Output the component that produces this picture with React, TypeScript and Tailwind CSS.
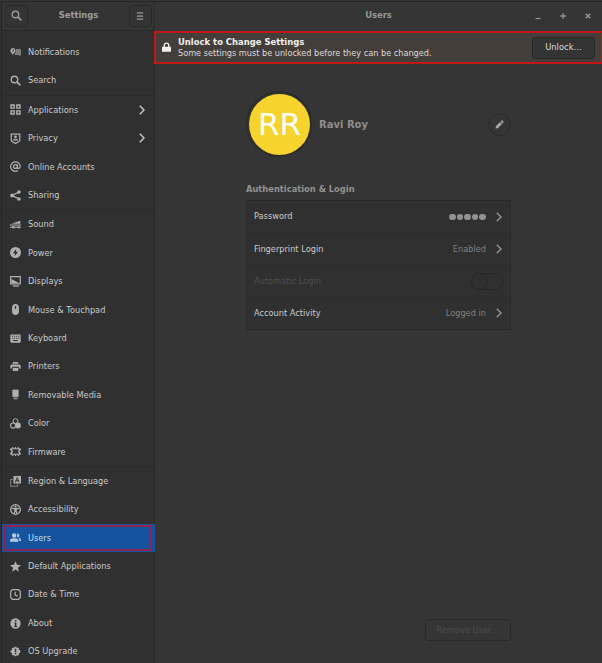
import type { ReactNode } from "react";

function Icon({ children, size = 11 }: { children: ReactNode; size?: number }) {
  return (
    <svg viewBox="0 0 16 16" width={size} height={size} fill="currentColor" className="shrink-0">
      {children}
    </svg>
  );
}

const stroke = { fill: "none", stroke: "currentColor" };

const icons: Record<string, ReactNode> = {
  notifications: (
    <>
      <path fillRule="evenodd" d="M4 1.500a4 4 0 0 1 1.500 7.700L3.500 11.500 2.700 9A4 4 0 0 1 4 1.500zM3.200 3.500v1h1.400L3.500 6.200v1h1.200V6.500L5.800 5V3.500z" />
      <path opacity=".6" d="M8.500 3H16v8.500h-1V14l-2.500-2.500H6.500V10A5 5 0 0 0 8.500 6z" />
    </>
  ),
  search: (
    <>
      <circle cx="6.500" cy="6.500" r="4.700" {...stroke} strokeWidth="2" />
      <path d="m10 10 5 5" {...stroke} strokeWidth="2.400" />
    </>
  ),
  applications: (
    <path d="M1.500 1.500h4.500v4.500H1.500zM10 1.500h4.500v4.500H10zM1.500 10h4.500v4.500H1.500zM10 10h4.500v4.500H10z" {...stroke} strokeWidth="2.100" />
  ),
  privacy: (
    <>
      <path d="M1.800 1.500h12.400v9c0 1.500-2.500 3-6.200 4.500-3.700-1.500-6.200-3-6.200-4.500z" {...stroke} strokeWidth="1.800" />
      <circle cx="8" cy="5.500" r="2" />
      <path d="M4 11c0-2 2-2.800 4-2.800s4 .8 4 2.800z" />
    </>
  ),
  online: (
    <>
      <circle cx="8" cy="8" r="2.800" {...stroke} strokeWidth="1.800" />
      <path d="M10.800 5v4c0 2.500 4 2.500 4-1A6.900 6.900 0 1 0 11.500 14" {...stroke} strokeWidth="1.800" />
    </>
  ),
  sharing: (
    <>
      <circle cx="3" cy="8" r="2.800" />
      <circle cx="13" cy="3" r="2.600" />
      <circle cx="13" cy="13" r="2.600" />
      <path d="M13 3 3 8l10 5" {...stroke} strokeWidth="2" />
    </>
  ),
  sound: (
    <>
      <path d="M2 7 15 2.500V7z" />
      <path d="M0 8.800h16M0 12h16" {...stroke} strokeWidth="1.500" />
      <path d="M3 10.500h4v3H3zM11 10.500h3v3h-3z" />
    </>
  ),
  power: <path fillRule="evenodd" d="M8 0a8 8 0 1 1 0 16A8 8 0 0 1 8 0zm1 3L4 9h3.200L6.800 13 12 7H8.700z" />,
  displays: (
    <>
      <path d="M1 1h14v10.500H1z" {...stroke} strokeWidth="1.800" />
      <path d="M2 4.500 13 10H2z" />
      <path d="M4 14.500h9" {...stroke} strokeWidth="1.900" />
    </>
  ),
  mouse: <path fillRule="evenodd" d="M8 0c3 0 5 2 5 5v6c0 3-2 5-5 5s-5-2-5-5V5c0-3 2-5 5-5zm-1 3v4h2V3z" />,
  keyboard: (
    <path
      fillRule="evenodd"
      d="M1.500 2h13l1 1v10l-1 1h-13l-1-1V3zM3 4v1.500h1.500V4zm3 0v1.500h1.500V4zm3 0v1.500h1.500V4zm3 0v1.500h1.500V4zM3 7v1.500h1.500V7zm3 0v1.500h1.500V7zm3 0v1.500h1.500V7zm3 0v1.500h1.500V7zM4.500 10.200v1.600h7v-1.600z"
    />
  ),
  printers: (
    <>
      <path d="M4 1.500h8V4H4zM2 5h12l1.500 1.500V11H13V8.500H3V11H.500V6.500z" />
      <path d="M4 10h8v4.500H4z" />
    </>
  ),
  media: (
    <>
      <path d="M3.500 1h9v10.500h-9z" />
      <path opacity=".75" d="M5 12.300h6V15H5z" />
    </>
  ),
  color: (
    <>
      <circle cx="8" cy="4.500" r="3.500" {...stroke} strokeWidth="1.400" />
      <circle cx="4.500" cy="11" r="3.700" {...stroke} strokeWidth="1.600" />
      <circle cx="11.500" cy="11" r="4.300" />
    </>
  ),
  firmware: (
    <>
      <path d="M2 4h12v2.500h-1v3h1V12H2V9.500h1v-3H2z" {...stroke} strokeWidth="1.800" />
      <path d="M4 1.500V4M8 1.500V4M12 1.500V4M4 12v2.500M8 12v2.500M12 12v2.500M0 5h2M0 11h2M14 5h2M14 11h2" {...stroke} strokeWidth="1.700" />
    </>
  ),
  region: (
    <>
      <path fillRule="evenodd" d="M5 0h11v11H5zm4.700 2L7 9h1.600l.5-1.500h2.800l.5 1.500H14l-2.700-7zm.8 1.800.9 2.400H9.600z" />
      <path d="M4 5H1v10h10v-3" {...stroke} strokeWidth="1.500" opacity=".65" />
    </>
  ),
  accessibility: (
    <>
      <circle cx="8" cy="8" r="7" {...stroke} strokeWidth="1.900" />
      <circle cx="8" cy="3.700" r="1.500" />
      <path d="M3 5.500h10v1.700L9.800 8v2l1.200 4H9.200L8 11l-1.200 3H5l1.200-4V8L3 7.200z" />
    </>
  ),
  users: (
    <>
      <circle cx="6" cy="5" r="3.200" />
      <path d="M0 14v-1.500C0 10 2.500 9 6 9s6 1 6 3.500V14z" />
      <path d="M10 2.500a2.800 2.800 0 1 1 0 5.300 5 5 0 0 0 0-5.300zM13.300 13H16v-1.500c0-2-1.700-2.800-4-2.800 1 .8 1.500 2.300 1.300 4.300z" />
    </>
  ),
  star: <path d="m8 .3 2.200 5.300 5.800.4-4.500 3.700 1.500 5.800-5-3.200-5 3.200 1.500-5.800L0 6l5.800-.4z" />,
  clock: (
    <>
      <path d="M3.500 1h9L15 3.500v9L12.500 15h-9L1 12.500v-9z" {...stroke} strokeWidth="1.800" />
      <path d="M7.500 4v4.800l3.500 1.500" {...stroke} strokeWidth="1.800" />
    </>
  ),
  about: (
    <path fillRule="evenodd" d="M8 .5a7.500 7.500 0 1 1 0 15 7.500 7.500 0 0 1 0-15zM7 3v2.200h2.300V3zM6 6.500v1.200h1v4H6V13h4.300v-1.300h-1V6.500z" />
  ),
  upgrade: (
    <path
      fillRule="evenodd"
      d="M6.700 1h2.600l.5 1.800 1.700-.8 2 2-.8 1.700 2.300.6v3.400l-2.300.6.800 1.700-2 2-1.700-.8-.5 1.800H6.700l-.5-1.800-1.700.8-2-2 .8-1.700L1 9.700V6.300l2.300-.6L2.500 4l2-2 1.700.8zM6.900 4v5h2.200V4zm0 6v2h2.200v-2z"
    />
  ),
};

type Item = { icon: string; label: string; arrow?: boolean; selected?: boolean };

const groups: Item[][] = [
  [
    { icon: "notifications", label: "Notifications" },
    { icon: "search", label: "Search" },
  ],
  [
    { icon: "applications", label: "Applications", arrow: true },
    { icon: "privacy", label: "Privacy", arrow: true },
    { icon: "online", label: "Online Accounts" },
    { icon: "sharing", label: "Sharing" },
  ],
  [
    { icon: "sound", label: "Sound" },
    { icon: "power", label: "Power" },
    { icon: "displays", label: "Displays" },
    { icon: "mouse", label: "Mouse & Touchpad" },
    { icon: "keyboard", label: "Keyboard" },
    { icon: "printers", label: "Printers" },
    { icon: "media", label: "Removable Media" },
    { icon: "color", label: "Color" },
    { icon: "firmware", label: "Firmware" },
  ],
  [
    { icon: "region", label: "Region & Language" },
    { icon: "accessibility", label: "Accessibility" },
    { icon: "users", label: "Users", selected: true },
    { icon: "star", label: "Default Applications" },
    { icon: "clock", label: "Date & Time" },
    { icon: "about", label: "About" },
    { icon: "upgrade", label: "OS Upgrade" },
  ],
];

function Chevron() {
  return (
    <svg viewBox="0 0 6 10" className="h-[10px] w-[6px] shrink-0" fill="none" stroke="currentColor" strokeWidth="1.400">
      <path d="M.8.8 5 5 .8 9.200" />
    </svg>
  );
}

function SidebarRow({ item }: { item: Item }) {
  return (
    <div
      className={
        item.selected
          ? "relative -mr-px flex h-[28.400px] items-center bg-[#15539e] pl-2 pr-[10px] text-[#d0dcea]"
          : "flex h-[28.400px] items-center pl-2 pr-[9px] text-[#cacaca]"
      }
    >
      {item.selected && <div className="absolute inset-y-[1px] left-[2px] right-[3px] border-2 border-[#8d2350]" />}
      <span className={item.selected ? "text-[#b9cbe2]" : "text-[#b0b0b0]"}>
        <Icon>{icons[item.icon]}</Icon>
      </span>
      <span className="ml-[7px] flex-1 whitespace-nowrap">{item.label}</span>
      {item.arrow && <Chevron />}
    </div>
  );
}

function Sidebar() {
  return (
    <aside className="flex w-[155px] shrink-0 flex-col border-r border-[#292929] bg-[#303030] pl-[2px]">
      <header className="flex h-[30px] shrink-0 items-center justify-between border-b border-[#272727] bg-[#343434] pl-[3px] pr-[2px] text-[#9c9c9c]">
        <button className="flex h-[22px] w-[23px] items-center justify-center rounded-[3px] border border-[#292929]">
          <Icon>{icons.search}</Icon>
        </button>
        <h1 className="text-[8.400px] font-bold">Settings</h1>
        <button className="flex h-[22px] w-[23px] items-center justify-center rounded-[3px] border border-[#292929]">
          <Icon size={10}>
            <path d="M3 3h10M3 8h10M3 13h10" stroke="currentColor" strokeWidth="2" />
          </Icon>
        </button>
      </header>
      <nav className="pt-[7px]">
        {groups.map((group, i) => (
          <div key={i} className={i > 0 ? "border-t border-[#2b2b2b]" : ""}>
            {group.map((item) => (
              <SidebarRow key={item.label} item={item} />
            ))}
          </div>
        ))}
      </nav>
    </aside>
  );
}

function WindowBar() {
  return (
    <header className="flex h-[30px] shrink-0 items-center pb-px pl-[155px] text-[#959595]">
      <h2 className="w-[137px] text-center text-[8.400px] font-bold">Users</h2>
      <div className="ml-auto flex items-center gap-[17px] pr-[10px]">
        <svg className="h-2 w-2" viewBox="0 0 8 8" stroke="currentColor" strokeWidth="1.200">
          <path d="M1.500 6.500h5" />
        </svg>
        <svg className="h-2 w-2" viewBox="0 0 8 8" stroke="currentColor" strokeWidth="1.300">
          <path d="M4 1.300v5.400M1.300 4h5.400" />
        </svg>
        <svg className="h-2 w-2" viewBox="0 0 8 8" stroke="currentColor" strokeWidth="1.500">
          <path d="m1.700 1.700 4.600 4.600m0-4.600L1.700 6.300" />
        </svg>
      </div>
    </header>
  );
}

function Banner() {
  return (
    <div className="-ml-[1px] flex h-[33px] shrink-0 items-center border-2 border-r border-[#c21717] bg-[#433e3a] pl-[6px] pr-[6px] text-[#f0f0ee]">
      <svg viewBox="0 0 9 11" className="h-[11px] w-[9px]">
        <path d="M2.300 5V3.300a2.200 2.200 0 0 1 4.400 0V5" fill="none" stroke="currentColor" strokeWidth="1.400" />
        <path d="M.5 4.800h8q.5 0 .5.500v4q0 .5-.5.500h-8Q0 9.800 0 9.300v-4q0-.5.5-.5z" fill="currentColor" />
      </svg>
      <div className="ml-[7px] flex-1 whitespace-nowrap pt-px leading-[11px]">
        <p className="text-[8.450px] font-bold">Unlock to Change Settings</p>
        <p className="text-[8.160px] text-[#dddcda]">Some settings must be unlocked before they can be changed.</p>
      </div>
      <button className="flex h-[22px] w-[63px] items-center justify-center rounded-[3px] border border-[#282828] bg-[#343434] text-[8.400px] text-[#dcdcdc]">
        Unlock…
      </button>
    </div>
  );
}

function SettingRow({ label, children, dim }: { label: string; children: ReactNode; dim?: boolean }) {
  return (
    <div className="flex h-[32px] items-center border-t border-[#2c2c2c] pb-px pl-[7px] pr-2 first:border-t-0">
      <span className={dim ? "flex-1 text-[#4f4f4f]" : "flex-1 text-[#cccccc]"}>{label}</span>
      <div className="flex items-center gap-[10px] text-[#959595]">{children}</div>
    </div>
  );
}

function UserPanel() {
  return (
    <section className="ml-[91px] flex w-[265px] flex-1 flex-col pt-[27px]">
      <div className="flex items-center">
        <div className="flex size-[66px] items-center justify-center rounded-full border border-[#2a2a2a] bg-[#303030]">
          <div className="flex size-[61px] items-center justify-center rounded-full bg-[#f6d32d] pl-px text-[31px] leading-none text-white">
            RR
          </div>
        </div>
        <h3 className="ml-[7px] text-[10px] font-bold text-[#8d8d8d]">Ravi Roy</h3>
        <button className="ml-auto flex size-[23px] items-center justify-center rounded-full border border-[#292929] text-[#a9a9a9]">
          <Icon size={9}>
            <path d="m1 15 .5-4L9 3.500 12.500 7 5 14.500zM10 2.500 11.700.8q.8-.6 1.600.1l1.800 1.800q.7.8 0 1.600L13.500 6z" />
          </Icon>
        </button>
      </div>
      <h4 className="mt-[26px] text-[8.330px] font-bold leading-3 text-[#929292]">Authentication &amp; Login</h4>
      <div className="mt-[5px] rounded-[1px] border border-[#292929] bg-[#303030]">
        <SettingRow label="Password">
          <span className="flex gap-px pt-px">
            {[0, 1, 2, 3, 4].map((n) => (
              <i key={n} className="size-[6.600px] rounded-full bg-[#929292]" />
            ))}
          </span>
          <Chevron />
        </SettingRow>
        <SettingRow label="Fingerprint Login">
          <span className="text-[#808080]">Enabled</span>
          <Chevron />
        </SettingRow>
        <SettingRow label="Automatic Login" dim>
          <span className="-mr-px flex h-[17px] w-[32px] rounded-full border border-[#272727]">
            <i className="-m-px size-[17px] rounded-full border border-[#272727]" />
          </span>
        </SettingRow>
        <SettingRow label="Account Activity">
          <span className="text-[#808080]">Logged in</span>
          <Chevron />
        </SettingRow>
      </div>
      <button className="mb-[22px] ml-auto mt-auto flex h-[22px] w-[86px] items-center justify-center rounded-[3px] border border-[#292929] text-[8.300px] text-[#4d4d4d]">
        Remove User…
      </button>
    </section>
  );
}

export default function App() {
  return (
    <div className="relative flex h-[663px] w-[602px] overflow-hidden bg-[#353535] pt-[1px] font-['DejaVu_Sans',sans-serif] text-[8.220px]">
      <Sidebar />
      <main className="flex min-w-0 flex-1 flex-col">
        <WindowBar />
        <Banner />
        <UserPanel />
      </main>
      <div className="pointer-events-none absolute inset-0 left-[1px] top-[1px] border-l border-t border-[#252525]" />
    </div>
  );
}
